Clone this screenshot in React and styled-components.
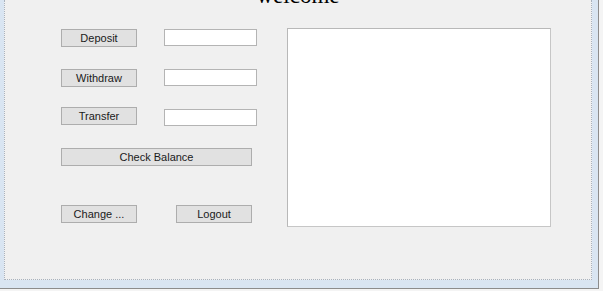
import styled, { createGlobalStyle } from "styled-components";

const GlobalStyle = createGlobalStyle`
    html, body {
        margin: 0;
        padding: 0;
        background: #f4f4f4;
        overflow: hidden;
    }
    * {
        box-sizing: border-box;
    }
`;

const ACTION_ROWS = [
    { label: "Deposit", offset: 1, inputOffset: 0 },
    { label: "Withdraw", offset: 22, inputOffset: 0 },
    { label: "Transfer", offset: 20, inputOffset: 2 },
]

export default function App() {
    return (
        <>
            <GlobalStyle />
            <WindowFrame>
                <Panel>
                    <Title>welcome</Title>
                    <Body>
                        <LeftColumn>
                            {ACTION_ROWS.map((row) => (
                                <ActionRow key={row.label} $offset={row.offset}>
                                    <Button>{row.label}</Button>
                                    <AmountInput $offset={row.inputOffset} />
                                </ActionRow>
                            ))}
                            <Button $wide $offset={22}>Check Balance</Button>
                            <FooterRow>
                                <Button>Change ...</Button>
                                <Button>Logout</Button>
                            </FooterRow>
                        </LeftColumn>
                        <OutputArea readOnly />
                    </Body>
                </Panel>
            </WindowFrame>
        </>
    )
}

const WindowFrame = styled.div`
    width: 599px;
    height: 289px;
    background: #d9e5f2;
    border-right: 1px solid #8c8c8c;
    border-bottom: 1px solid #8c8c8c;
    padding: 0 6px 8px 4px;
    display: flex;
`;

const Panel = styled.div`
    flex: 1;
    background: #f0f0f0;
    border: 1px dotted #a9b2bd;
    border-top: none;
    display: flex;
    flex-direction: column;
    overflow: hidden;
`;

const Title = styled.div`
    margin-top: -16px;
    height: 23px;
    line-height: 23px;
    text-align: center;
    font-family: "Liberation Serif", "Times New Roman", serif;
    font-size: 23px;
    color: #000;
`;

const Body = styled.div`
    margin-top: 21px;
    padding-left: 56px;
    display: flex;
    gap: 35px;
    align-items: flex-start;
`;

const LeftColumn = styled.div`
    width: 191px;
    flex-shrink: 0;
    display: flex;
    flex-direction: column;
`;

const ActionRow = styled.div`
    display: flex;
    align-items: flex-start;
    gap: 27px;
    margin-top: ${(p) => p.$offset}px;
`;

const Button = styled.button`
    flex-shrink: 0;
    width: ${(p) => (p.$wide ? "191px" : "76px")};
    height: 18px;
    margin-top: ${(p) => p.$offset || 0}px;
    padding: 0;
    background: #e1e1e1;
    border: 1px solid #adadad;
    border-radius: 0;
    font-family: "Liberation Sans", Arial, sans-serif;
    font-size: 11px;
    color: #1a1a1a;
    line-height: 16px;
`;

const AmountInput = styled.input`
    flex-shrink: 0;
    width: 93px;
    height: 17px;
    margin-top: ${(p) => p.$offset}px;
    background: #fff;
    border: 1px solid #b4b4b4;
    outline: none;
    padding: 0 2px;
`;

const FooterRow = styled.div`
    margin-top: 39px;
    display: flex;
    justify-content: space-between;
`;

const OutputArea = styled.textarea`
    flex-shrink: 0;
    width: 264px;
    height: 199px;
    resize: none;
    background: #fff;
    border: 1px solid #c6c6c6;
    border-top-color: #b8b8b8;
    border-left-color: #b8b8b8;
    outline: none;
    margin: 0;
`;
